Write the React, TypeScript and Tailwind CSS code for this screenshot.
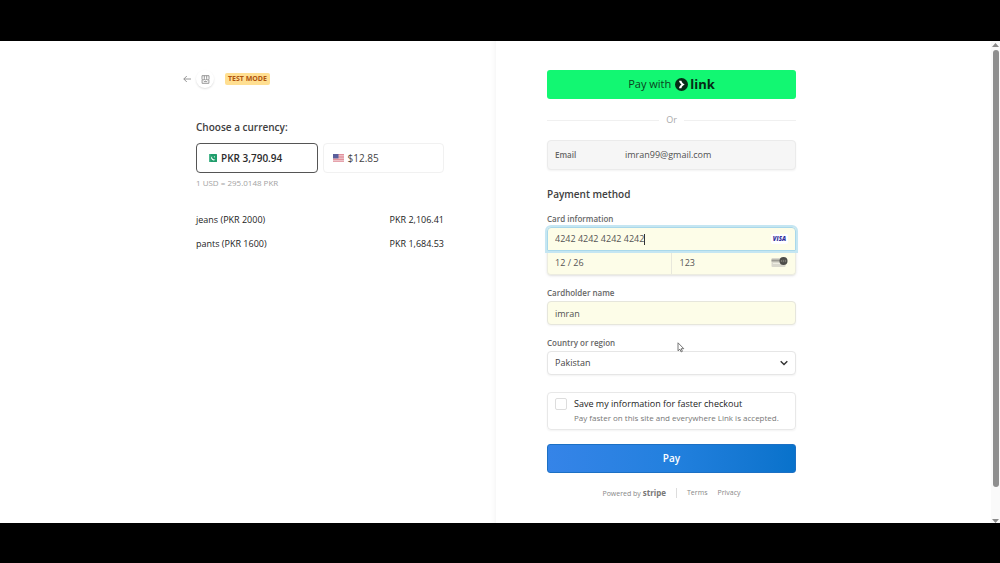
import { ReactNode, useState } from 'react';

interface LineItem {
  name: string;
  amount: string;
}

const items: LineItem[] = [
  { name: 'jeans (PKR 2000)', amount: 'PKR 2,106.41' },
  { name: 'pants (PKR 1600)', amount: 'PKR 1,684.53' },
];

const PakistanFlag = () => (
  <svg width="8" height="8" viewBox="0 0 8 8" aria-hidden="true">
    <rect width="8" height="8" rx="0.6" fill="#1f9d6b" />
    <rect width="1.4" height="8" fill="#4db78e" />
    <path d="M3.2 2.3a2.2 2.2 0 1 0 3.2 2.9A2.3 2.3 0 0 1 3.2 2.3z" fill="#fff" />
    <circle cx="5.4" cy="2.8" r="0.6" fill="#fff" />
  </svg>
);

const UsaFlag = () => (
  <svg width="11" height="8" viewBox="0 0 11 8" aria-hidden="true">
    <rect width="11" height="8" rx="0.6" fill="#f4dfe2" />
    <path d="M0 .6h11M0 2.2h11M0 3.8h11M0 5.4h11M0 7.2h11" stroke="#de7f8b" strokeWidth="0.9" />
    <rect width="5.5" height="4.4" fill="#5a5f9c" />
  </svg>
);

const StoreIcon = () => (
  <svg width="9" height="9" viewBox="0 0 9 9" fill="none" stroke="#8c8c8c" strokeWidth="0.9" aria-hidden="true">
    <path d="M1 .7h7v3.1a1.15 1.15 0 0 1-2.33 0 1.15 1.15 0 0 1-2.34 0A1.15 1.15 0 0 1 1 3.8z" />
    <path d="M3.3.7v3M5.7.7v3M1.1 4.8v3.5h6.8V4.8M2.8 6.6h3.4" />
  </svg>
);

const LinkMark = () => (
  <svg width="13" height="13" viewBox="0 0 13 13" aria-hidden="true">
    <circle cx="6.5" cy="6.5" r="6.5" fill="#062b16" />
    <path d="M4 2.8h2.4c.5 1.700 1.500 2.900 3.300 3.700-1.800.8-2.800 2-3.300 3.700H4c.4-1.600 1.200-2.800 2.500-3.700C5.200 5.600 4.400 4.400 4 2.800z" fill="#fff" />
  </svg>
);

const CvcIcon = () => (
  <svg width="17" height="12" viewBox="0 0 17 12" aria-hidden="true">
    <rect x="0.5" y="1" width="14" height="9" rx="1" fill="#d9d8cd" />
    <rect x="0.5" y="2.5" width="14" height="2" fill="#9b9a92" />
    <rect x="2" y="6" width="9" height="1" fill="#eeede2" />
    <circle cx="12.5" cy="4" r="4" fill="#4c4c49" />
    <path d="M10.4 3v2M11.6 3.2h1v1.6h-1M13.7 3.2h1v1.6h-1" fill="none" stroke="#aaa99f" strokeWidth="0.5" />
  </svg>
);

const FieldLabel = ({ htmlFor, children }: { htmlFor: string; children: ReactNode }) => (
  <label htmlFor={htmlFor} className="block text-[8px] leading-4 font-semibold text-[#666]">
    {children}
  </label>
);

const OrderSummary = () => {
  const [currency, setCurrency] = useState('PKR');

  return (
    <section className="flex flex-1 justify-end pt-[29px] pr-[52px] shadow-[inset_-5px_0_5px_-4px_#f3f3f3]">
      <div className="w-full max-w-[248px]">
        <header className="-ml-[13px] flex h-[18px] items-center">
          <a href="#back" aria-label="Back">
            <svg width="8" height="8" viewBox="0 0 8 8" fill="none" stroke="#8a8a8a" strokeWidth="0.9" aria-hidden="true">
              <path d="M8 4H.8M3.8 1L.8 4l3 3" />
            </svg>
          </a>
          <span className="ml-[5px] flex size-[18px] items-center justify-center rounded-full shadow-[0_1px_2px_#dedede]">
            <StoreIcon />
          </span>
          <span className="ml-[11px] rounded-xs bg-[#ffdf91] px-[3px] text-[7px] leading-3 font-bold text-[#b0550f]">
            TEST MODE
          </span>
        </header>

        <h2 className="mt-[31px] text-[10px] leading-4 font-semibold text-[#404040]">Choose a currency:</h2>
        <div className="mt-2 grid grid-cols-2 gap-[5px]">
          <button
            type="button"
            aria-pressed={currency === 'PKR'}
            onClick={() => setCurrency('PKR')}
            className="flex h-[30px] items-center gap-1 rounded border border-[#555] pl-3 text-[10px] font-semibold text-[#2b2b2b]"
          >
            <PakistanFlag />
            PKR 3,790.94
          </button>
          <button
            type="button"
            aria-pressed={currency === 'USD'}
            onClick={() => setCurrency('USD')}
            className="flex h-[30px] items-center gap-1 rounded border border-[#f1f1f1] pl-[9px] text-[10px] font-medium text-[#444]"
          >
            <UsaFlag />
            $12.85
          </button>
        </div>
        <p className="mt-1 text-[8px] leading-3 text-[#a3a3a3]">1 USD = 295.0148 PKR</p>

        <ul className="mt-[23px] space-y-2 text-[9px] leading-4 font-medium text-[#1c1c1c]">
          {items.map((item) => (
            <li key={item.name} className="flex justify-between">
              <span>{item.name}</span>
              <span>{item.amount}</span>
            </li>
          ))}
        </ul>
      </div>
    </section>
  );
};

const PaymentForm = () => (
  <section className="flex-1 pt-[29px] pl-[51px]">
    <form className="w-full max-w-[249px]" onSubmit={(e) => e.preventDefault()}>
      <button
        type="button"
        className="flex h-[29px] w-full items-center justify-center rounded-[3px] bg-[#12f772] text-[11px] font-medium text-[#0b3f20]"
      >
        Pay with
        <span className="ml-1 flex items-center gap-0.5 text-[13px] font-bold text-[#062b16]">
          <LinkMark />
          link
        </span>
      </button>

      <div className="mt-3 flex h-[18px] items-center gap-[7px] text-[9px] text-[#aaa]">
        <span className="h-px flex-1 bg-[#f0f0f0]" />
        Or
        <span className="h-px flex-1 bg-[#f0f0f0]" />
      </div>

      <div className="mt-[11px] flex h-[30px] items-center rounded border border-[#ebebeb] bg-[#f6f6f6] px-[7px] shadow-xs">
        <label htmlFor="email" className="w-[70px] text-[8px] font-semibold text-[#666]">
          Email
        </label>
        <input
          id="email"
          type="email"
          readOnly
          defaultValue="imran99@gmail.com"
          className="min-w-0 flex-1 text-[9px] text-[#505050] outline-none"
        />
      </div>

      <h2 className="mt-4 text-[10px] leading-4 font-semibold text-[#404040]">Payment method</h2>

      <div className="mt-[9px]">
        <FieldLabel htmlFor="card-number">Card information</FieldLabel>
        <div className="rounded bg-[#fdfde8] text-[9px] text-[#555] shadow-sm">
          <div className="relative flex h-6 items-center rounded-t border border-[#a9d8ea] pr-[7px] pl-[7px] ring-2 ring-[#c5e6f2]">
            <input
              id="card-number"
              defaultValue="4242 4242 4242 4242"
              inputMode="numeric"
              className="min-w-0 flex-1 outline-none"
            />
            <span className="absolute left-[96px] h-[11px] w-px bg-[#333]" />
            <span className="rounded-xs bg-white px-0.5 text-[6px] leading-[10px] font-extrabold text-[#302f9b] italic">
              VISA
            </span>
          </div>
          <div className="grid h-6 grid-cols-2 rounded-b border border-t-0 border-[#ecece0]">
            <input
              aria-label="Expiration date"
              defaultValue="12 / 26"
              className="min-w-0 border-r border-[#e8e8dc] pl-[7px] outline-none"
            />
            <div className="flex items-center pr-[7px] pl-2">
              <input aria-label="CVC" defaultValue="123" className="min-w-0 flex-1 outline-none" />
              <CvcIcon />
            </div>
          </div>
        </div>
      </div>

      <div className="mt-[10px]">
        <FieldLabel htmlFor="name">Cardholder name</FieldLabel>
        <input
          id="name"
          defaultValue="imran"
          className="block h-6 w-full rounded border border-[#e6e6dc] bg-[#fdfde8] px-[7px] text-[9px] text-[#505050] shadow-xs outline-none"
        />
      </div>

      <div className="relative mt-[10px]">
        <FieldLabel htmlFor="country">Country or region</FieldLabel>
        <select
          id="country"
          defaultValue="Pakistan"
          className="block h-6 w-full appearance-none rounded border border-[#e6e6e6] bg-white px-[7px] text-[9px] text-[#444] shadow-xs outline-none"
        >
          <option>Pakistan</option>
          <option>United States</option>
        </select>
        <svg
          className="pointer-events-none absolute right-2 bottom-2"
          width="8"
          height="8"
          viewBox="0 0 8 8"
          fill="none"
          stroke="#333"
          strokeWidth="1.4"
          aria-hidden="true"
        >
          <path d="M.7 2.3L4 5.6l3.3-3.3" />
        </svg>
        {/* mouse pointer */}
        <svg
          className="pointer-events-none absolute top-[7px] left-[130px]"
          width="8"
          height="11"
          viewBox="0 0 8 11"
          fill="#fff"
          stroke="#666"
          strokeWidth="0.9"
          aria-hidden="true"
        >
          <path d="M1 .8v8l1.900-1.600 1.200 2.700 1.300-.6-1.200-2.600H6.800z" />
        </svg>
      </div>

      <div className="mt-[17px] flex h-[38px] gap-[7px] rounded border border-[#e8e8e8] px-[7px] pt-1 shadow-xs">
        <input
          id="save-info"
          type="checkbox"
          className="mt-px size-3 shrink-0 appearance-none rounded-xs border border-[#ddd] bg-white checked:bg-[#0b72d0]"
        />
        <div className="whitespace-nowrap">
          <label htmlFor="save-info" className="block text-[9px] leading-[14px] font-medium text-[#1c1c1c]">
            Save my information for faster checkout
          </label>
          <p className="text-[8px] leading-[14px] text-[#777]">
            Pay faster on this site and everywhere Link is accepted.
          </p>
        </div>
      </div>

      <button
        type="submit"
        className="mt-[14px] block h-[29px] w-full rounded-[3px] border border-[#1c70c4] bg-linear-to-r from-[#3584e8] via-[#2280de] to-[#0872cb] text-[10px] font-semibold text-white"
      >
        Pay
      </button>

      <footer className="mt-3 flex h-4 items-center justify-center text-[7px] text-[#888]">
        <span>
          Powered by <b className="text-[8px] text-[#777]">stripe</b>
        </span>
        <span className="mx-[10px] h-[10px] w-px bg-[#ddd]" />
        <a href="#terms">Terms</a>
        <a href="#privacy" className="ml-[10px]">
          Privacy
        </a>
      </footer>
    </form>
  </section>
);

const ScrollRail = () => (
  <div className="flex w-[9px] flex-col items-center bg-[#fafafa] pt-0.5" aria-hidden="true">
    <svg width="7" height="4" viewBox="0 0 7 4" fill="#8a8a8a">
      <path d="M3.5 0L7 4H0z" />
    </svg>
    <div className="mt-[3px] mb-8 w-[6px] flex-1 rounded-full bg-[#8f8f8f]" />
    <svg width="7" height="4" viewBox="0 0 7 4" fill="#8a8a8a">
      <path d="M0 0h7L3.5 4z" />
    </svg>
  </div>
);

const App = () => (
  <div className="flex min-h-screen flex-col bg-black pt-[41px] pb-10 font-['Open_Sans','Noto_Sans',sans-serif]">
    <main className="flex flex-1 bg-white">
      <OrderSummary />
      <PaymentForm />
      <ScrollRail />
    </main>
  </div>
);

export default App;
